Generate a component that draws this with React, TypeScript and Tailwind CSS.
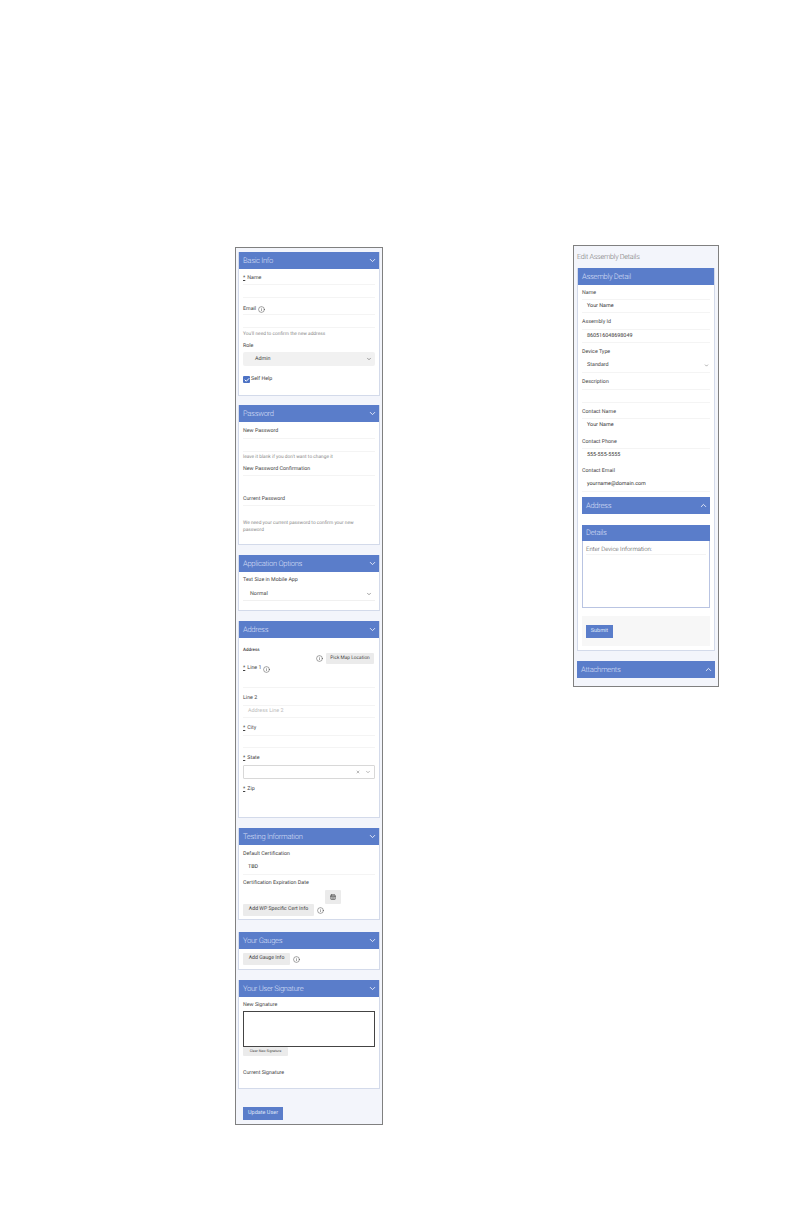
import type { ReactNode } from "react";
import { Check, ChevronDown, ChevronUp, Info, CalendarDays, X } from "lucide-react";

function Header({ title, icon = "down" }: { title: string; icon?: "down" | "up" | "none" }) {
  return (
    <div className="h-[17px] bg-[#5a7dca] flex items-center justify-between pl-[4px] pr-[2px] text-[7.6px] tracking-[-0.3px] font-light text-[#d5def5]">
      <span className="pt-[1px]">{title}</span>
      {icon === "up" && <ChevronUp className="w-[9px] h-[9px] text-[#e6ecfa]" strokeWidth={2.5} />}
      {icon === "down" && <ChevronDown className="w-[9px] h-[9px] text-[#e6ecfa]" strokeWidth={2.5} />}
    </div>
  );
}

function Card({ title, className, children }: { title: string; className: string; children: ReactNode }) {
  return (
    <div className={`bg-white border-b border-x border-[#d3daea] ${className}`}>
      <Header title={title} />
      <div className="px-[4px]">{children}</div>
    </div>
  );
}

function Label({ text, req, info, className = "h-[10px]" }: { text: string; req?: boolean; info?: boolean; className?: string }) {
  return (
    <div className={`flex items-center text-[5.3px] text-[#444] ${className}`}>
      {req && <span className="underline mr-[2px]">*</span>}
      <span>{text}</span>
      {info && <Info className="ml-[2px] w-[7px] h-[7px] text-[#333]" strokeWidth={1.5} />}
    </div>
  );
}

function Input({ value, h = "h-[14px]", className = "" }: { value?: string; h?: string; className?: string }) {
  return (
    <div className={`${h} border-t border-b border-[#f4f4f4] flex items-center pl-[5px] text-[5.4px] text-[#333] ${className}`}>
      {value}
    </div>
  );
}

function Help({ children }: { children: ReactNode }) {
  return <p className="text-[4.8px] leading-[7px] text-[#888]">{children}</p>;
}

function GrayButton({ text, className }: { text: string; className: string }) {
  return (
    <div className={`bg-[#ebebeb] rounded-[1px] flex items-center justify-center text-[#444] ${className}`}>{text}</div>
  );
}

function LeftPhone() {
  return (
    <div className="w-[148px] h-[878px] border border-[#808080] bg-[#f3f5fb] px-[2px] pt-[4px] shrink-0">
      <Card title="Basic Info" className="h-[144px]">
        <div className="pt-[4px]">
          <Label text="Name" req className="h-[10px] pt-[2px]" />
          <Input className="mt-[1px]" />
          <Label text="Email" info className="h-[11px] mt-[5px] pt-[2px]" />
          <Input />
          <div className="h-[9px] mt-[1px] pt-[2px] flex items-center"><Help>You'll need to confirm the new address</Help></div>
          <Label text="Role" className="h-[10px] mt-[3px] pt-[2px]" />
          <div className="mt-[1px] h-[14px] bg-[#f1f1f1] rounded-[2px] flex items-center justify-between pl-[12px] pr-[3px] text-[5.4px] text-[#444]">
            Admin
            <ChevronDown className="w-[6px] h-[6px]" />
          </div>
          <div className="mt-[10px] flex items-center gap-[1px] text-[5.3px] text-[#444]">
            <span className="w-[7px] h-[7px] bg-[#4d72c4] rounded-[1px] flex items-center justify-center">
              <Check className="w-[6px] h-[6px] text-white" strokeWidth={4} />
            </span>
            Self Help
          </div>
        </div>
      </Card>
      <Card title="Password" className="h-[140px] mt-[9px]">
        <div className="pt-[4px]">
          <Label text="New Password" className="h-[11px]" />
          <Input className="mt-[1px]" />
          <div className="h-[10px] flex items-center"><Help>leave it blank if you don't want to change it</Help></div>
          <Label text="New Password Confirmation" className="h-[10px] mt-[3px]" />
          <Input h="h-[15px]" className="border-b-0" />
          <Label text="Current Password" className="h-[10px] mt-[5px]" />
          <Input h="h-[14px]" className="border-b-0" />
          <div className="mt-[1px]"><Help>We need your current password to confirm your new password</Help></div>
        </div>
      </Card>
      <Card title="Application Options" className="h-[56px] mt-[10px]">
        <div className="pt-[4px]">
          <Label text="Text Size in Mobile App" />
          <div className="mt-[2px] h-[13px] border-b border-[#f0f0f0] flex items-center justify-between pl-[7px] pr-[3px] text-[5.4px] text-[#444]">
            Normal
            <ChevronDown className="w-[6px] h-[6px]" />
          </div>
        </div>
      </Card>
      <Card title="Address" className="h-[197px] mt-[10px]">
        <div className="pt-[10px]">
          <div className="text-[4.5px] leading-[6px] font-medium text-[#444]">Address</div>
          <div className="flex justify-end items-center gap-[3px] pr-[1px] -mt-[1px]">
            <Info className="w-[7px] h-[7px] text-[#333]" strokeWidth={1.5} />
            <GrayButton text="Pick Map Location" className="w-[48px] h-[11px] text-[4.8px]" />
          </div>
          <Label text="Line 1" req info className="h-[8px] mt-[1px]" />
          <Input h="h-[15px]" className="border-t-0" />
          <Label text="Line 2" className="h-[10px] mt-[6px]" />
          <Input value="Address Line 2" h="h-[13px]" className="text-[#bbb] mt-[1px]" />
          <Label text="City" req className="h-[10px] mt-[6px]" />
          <Input h="h-[13px]" className="mt-[1px]" />
          <Label text="State" req className="h-[10px] mt-[6px]" />
          <div className="mt-[1px] h-[14px] border border-[#d8d8d8] rounded-[1px] flex items-center justify-end gap-[5px] pr-[3px] text-[#777]">
            <X className="w-[4px] h-[4px]" strokeWidth={3} />
            <ChevronDown className="w-[6px] h-[6px]" />
          </div>
          <Label text="Zip" req className="h-[10px] mt-[6px]" />
        </div>
      </Card>
      <Card title="Testing Information" className="h-[92px] mt-[10px]">
        <div className="pt-[5px]">
          <Label text="Default Certification" />
          <Input value="TBD" h="h-[14px]" className="border-t-0 mt-[1px]" />
          <Label text="Certification Expiration Date" className="h-[10px] mt-[4px]" />
          <div className="flex justify-end pr-[34px] mt-[1px]">
            <GrayButton text="" className="w-[16px] h-[14px]" />
          </div>
          <div className="-mt-[14px] h-[14px] flex justify-end items-center pr-[39px] relative">
            <CalendarDays className="w-[6px] h-[6px] text-[#444]" strokeWidth={2.5} />
          </div>
          <div className="flex items-center gap-[3px]">
            <GrayButton text="Add WP Specific Cert Info" className="w-[71px] h-[12px] text-[5.2px]" />
            <Info className="w-[7px] h-[7px] text-[#333]" strokeWidth={1.5} />
          </div>
        </div>
      </Card>
      <Card title="Your Gauges" className="h-[38px] mt-[12px]">
        <div className="pt-[4px] flex items-center gap-[3px]">
          <GrayButton text="Add Gauge Info" className="w-[47px] h-[12px] text-[5.2px]" />
          <Info className="w-[7px] h-[7px] text-[#333]" strokeWidth={1.5} />
        </div>
      </Card>
      <Card title="Your User Signature" className="h-[109px] mt-[10px]">
        <div className="pt-[4px]">
          <Label text="New Signature" />
          <div className="h-[36px] border border-[#444] bg-white" />
          <GrayButton text="Clear New Signature" className="w-[45px] h-[9px] text-[3.5px]" />
          <Label text="Current Signature" className="h-[10px] mt-[13px]" />
        </div>
      </Card>
      <div className="mt-[18px] ml-[5px] w-[40px] h-[13px] bg-[#5a7dca] flex items-center justify-center text-[5.5px] text-[#dfe6f8]">
        Update User
      </div>
    </div>
  );
}

function RightPhone() {
  return (
    <div className="w-[146px] h-[442px] border border-[#808080] bg-[#f3f5fb] px-[3px] shrink-0">
      <div className="h-[22px] flex items-center text-[7.2px] tracking-[-0.25px] font-light text-[#777]">Edit Assembly Details</div>
      <div className="bg-white border-x border-b border-[#d3daea] h-[383px]">
        <Header title="Assembly Detail" icon="none" />
        <div className="px-[4px] pt-[3px]">
          <Label text="Name" className="h-[10px] pt-[2px]" />
          <Input value="Your Name" className="mt-[1px]" />
          <Label text="Assembly Id" className="h-[10px] mt-[4px] pt-[2px]" />
          <Input value="860516048698049" className="mt-[2px]" />
          <Label text="Device Type" className="h-[10px] mt-[4px] pt-[2px]" />
          <div className="mt-[2px] h-[14px] border-b border-[#f4f4f4] flex items-center justify-between pl-[5px] pr-[1px] text-[5.4px] text-[#444]">
            Standard
            <ChevronDown className="w-[5px] h-[5px]" />
          </div>
          <Label text="Description" className="h-[10px] mt-[4px] pt-[2px]" />
          <Input className="mt-[2px]" />
          <Label text="Contact Name" className="h-[10px] mt-[4px] pt-[2px]" />
          <Input value="Your Name" className="border-b-0 mt-[1px]" />
          <Label text="Contact Phone" className="h-[10px] mt-[5px] pt-[2px]" />
          <Input value="555-555-5555" className="mt-[1px] border-b-0" />
          <Label text="Contact Email" className="h-[10px] mt-[4px] pt-[2px]" />
          <Input value="yourname@domain.com" className="mt-[2px] border-t-0 text-[#222]" />
          <div className="mt-[5px]"><Header title="Address" icon="up" /></div>
          <div className="mt-[11px] h-[83px] border-x border-b border-[#b9c4e2]">
            <div className="h-[16px] -mx-px bg-[#5a7dca] flex items-center pl-[4px] text-[7.6px] tracking-[-0.3px] font-light text-[#d5def5]">Details</div>
            <div className="px-[3px] pt-[3px]">
              <div className="h-[11px] border-b border-[#f4f4f4] flex items-center text-[6px] font-light text-[#444]">Enter Device Information:</div>
            </div>
          </div>
          <div className="mt-[8px] h-[30px] bg-[#f7f7f7] flex items-center pl-[4px]">
            <div className="w-[27px] h-[13px] bg-[#5a7dca] flex items-center justify-center text-[5.5px] text-[#dfe6f8]">Submit</div>
          </div>
        </div>
      </div>
      <div className="mt-[10px]"><Header title="Attachments" icon="up" /></div>
    </div>
  );
}

export default function App() {
  return (
    <div className="w-[792px] h-[1224px] bg-white font-['Roboto',sans-serif] [text-rendering:geometricPrecision] antialiased flex items-start pl-[235px] pt-[245px] gap-[190px]">
      <div className="mt-[2px]"><LeftPhone /></div>
      <RightPhone />
    </div>
  );
}
